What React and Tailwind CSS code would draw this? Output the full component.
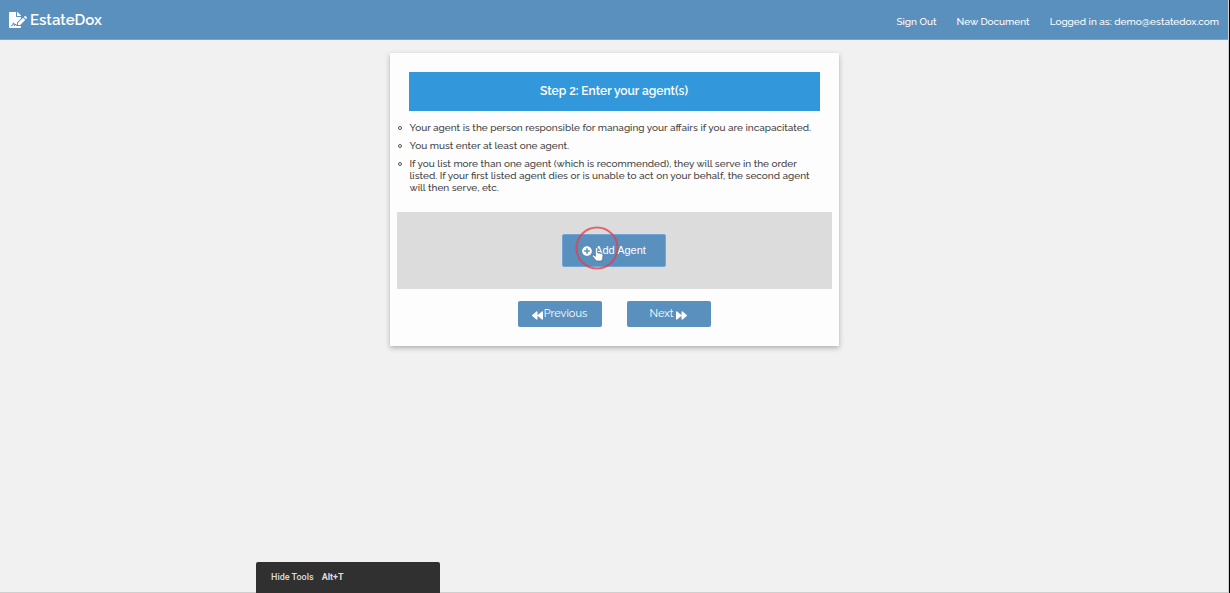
import { FaBackward, FaFileSignature, FaForward, FaPlusCircle } from "react-icons/fa";

const notes = [
  "Your agent is the person responsible for managing your affairs if you are incapacitated.",
  "You must enter at least one agent.",
  "If you list more than one agent (which is recommended), they will serve in the order listed. If your first listed agent dies or is unable to act on your behalf, the second agent will then serve, etc.",
];

function Header() {
  return (
    <header className="flex h-10 items-center justify-between border-b border-[#7fa3c2] bg-[#5a90be] px-[9px] text-white">
      <a href="#home" className="flex items-center gap-[3px] text-[15px] font-semibold leading-5">
        <FaFileSignature className="h-4 w-[18px]" aria-hidden="true" />
        EstateDox
      </a>
      <nav className="flex items-center gap-5 pt-1 text-[10px] font-medium leading-4">
        <a href="#sign-out">Sign Out</a>
        <a href="#new">New Document</a>
        <a href="#account">Logged in as: demo@estatedox.com</a>
      </nav>
    </header>
  );
}

function ClickPointer() {
  return (
    <svg
      className="pointer-events-none absolute left-3 -top-2 h-12 w-12"
      viewBox="0 0 48 48"
      aria-hidden="true"
    >
      <circle cx="23" cy="22" r="20.5" fill="none" stroke="#e83c46" strokeOpacity="0.75" strokeWidth="2" />
      <path
        d="M21.4 22.6c0-1.5 2.2-1.5 2.2 0v4.2l1.7.2 1.6.4 1.3.5c.6.3.8.8.8 1.4l-.4 3.4-1 2.3h-5.2l-3.8-4.6c-.7-1 .5-1.9 1.4-1.2l1.4 1.2z"
        fill="#fff"
        stroke="#4b5963"
        strokeWidth="0.6"
      />
    </svg>
  );
}

export default function App() {
  return (
    <div className="flex min-h-screen flex-col border-r border-black bg-[#f1f1f1] font-['Raleway','Lato',sans-serif]">
      <div className="flex grow flex-col border-b border-r border-[#cfcfcf]">
        <Header />
        <main className="flex grow flex-col items-center pt-[13px]">
          <section className="w-full max-w-[449px] bg-[#fdfdfd] px-[7px] pb-[19px] pt-[19px] shadow-[0_2px_5px_rgba(0,0,0,0.28)]">
            <h1 className="mx-3 bg-[#3398db] py-[10px] text-center text-xs font-semibold leading-[19px] text-white">
              Step 2: Enter your agent(s)
            </h1>
            <ul className="mx-[13px] mt-[11px] list-none space-y-1.5 text-[10px] font-medium leading-3 text-[#444]">
              {notes.map((note) => (
                <li
                  key={note}
                  className="relative before:absolute before:-left-3 before:top-1 before:size-1 before:rounded-full before:border before:border-[#555]"
                >
                  {note}
                </li>
              ))}
            </ul>
            <div className="mt-[18px] flex justify-center bg-[#dcdcdc] py-[22px]">
              <div className="relative">
                <button
                  type="button"
                  className="flex h-[33px] w-[104px] items-center justify-center gap-[3px] rounded-xs border border-[#6fa5d8] bg-[#5a90be] font-['Liberation_Sans',sans-serif] text-[11px] text-white"
                >
                  <FaPlusCircle className="size-[10px]" aria-hidden="true" />
                  Add Agent
                </button>
                <ClickPointer />
              </div>
            </div>
            <div className="mt-3 flex justify-center gap-[25px] text-[11px] text-white">
              <button type="button" className="flex h-[26px] w-[84px] items-center justify-center gap-px rounded-xs bg-[#5a90be]">
                <FaBackward className="mt-0.5 size-[11px]" aria-hidden="true" />
                Previous
              </button>
              <button type="button" className="flex h-[26px] w-[84px] items-center justify-center gap-[3px] rounded-xs bg-[#5a90be]">
                Next
                <FaForward className="mt-0.5 size-[11px]" aria-hidden="true" />
              </button>
            </div>
          </section>
        </main>
      </div>
      <div className="fixed bottom-0 left-64 flex h-[31px] w-[184px] items-center gap-2 rounded-t-xs bg-[#303030] px-[15px] font-['Roboto',sans-serif] text-[9px] text-[#ddd]">
        <span className="font-medium">Hide Tools</span>
        <kbd className="font-['Roboto',sans-serif] font-bold">Alt+T</kbd>
      </div>
    </div>
  );
}
